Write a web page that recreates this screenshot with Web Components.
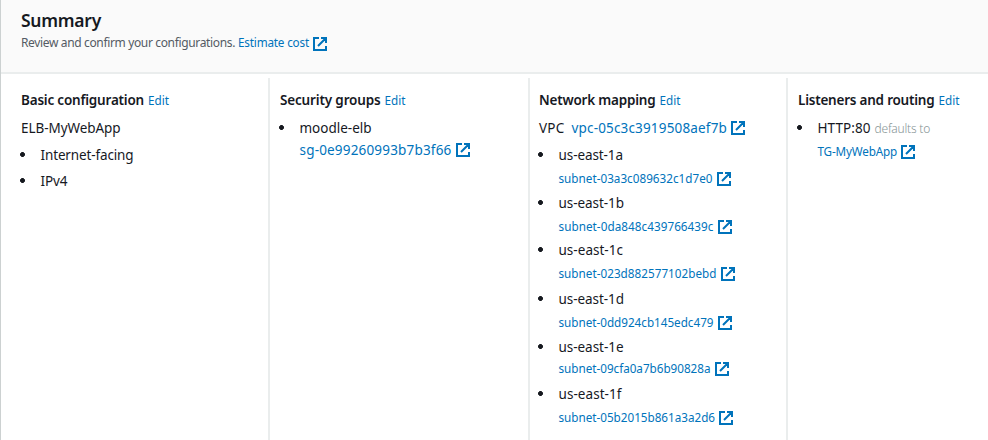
<!DOCTYPE html>
<html lang="en">
<head>
<meta charset="utf-8">
<title>Summary</title>
<style>
html,body{margin:0;height:440px;overflow:hidden;background:#fff}
body{font-family:"Noto Sans","Open Sans",sans-serif;font-size:14px;color:#16191f}
</style>
</head>
<body>
<summary-panel></summary-panel>
<script>
// A run of text that is tracked to fill its measure (w, in px).
customElements.define('text-run', class extends HTMLElement {
  connectedCallback() {
    const root = this.attachShadow({mode: 'open'});
    root.innerHTML = `<style>
      :host{display:block;flex:none;white-space:pre;font-size:13.5px;line-height:20px}
      :host([kind=title]){font-size:17.5px;font-weight:600}
      :host([kind=head]){font-size:13.5px;font-weight:600}
      :host([kind=note]){font-size:12px;color:#545b64}
      :host([kind=faint]){font-size:12px;font-weight:300;color:#879596}
      :host([kind=link]){color:#0073bb}
      :host([kind=small]){font-size:11.7px;color:#0073bb}
      span{display:inline-block}
    </style><span><slot></slot></span>`;
    const w = +this.getAttribute('w'), s = root.querySelector('span');
    const n = this.textContent.length;
    this.style.width = w + 'px';
    s.style.letterSpacing = (w - s.getBoundingClientRect().width) / n + 'px';
  }
});
// The box is shorter than its drawing, so that the icon hangs below the baseline.
customElements.define('external-icon', class extends HTMLElement {
  connectedCallback() {
    this.attachShadow({mode: 'open'}).innerHTML = `<style>
      :host{display:block;flex:none;width:14px;height:${14 - (this.getAttribute('drop') || 4)}px;margin-left:4px}
      svg{display:block}
    </style><svg width="14" height="14" viewBox="0 0 14 14" fill="none" stroke="#0073bb" stroke-width="2"><path d="M6 1H1v12h12V9M8 1h5v5M12.5 1.5L5 9"/></svg>`;
  }
});
// One line of a column; gap is the space above it.
customElements.define('info-line', class extends HTMLElement {
  connectedCallback() {
    this.attachShadow({mode: 'open'}).innerHTML = `<style>
      :host{display:flex;align-items:baseline;height:20px;line-height:20px;margin-top:${this.getAttribute('gap') || 0}px}
      :host::before{content:"\\200b";width:0;flex:none}
      :host([indent]),:host([bullet]){padding-left:19.5px}
      i{width:5px;height:8px;background:radial-gradient(circle at 2.5px 2.5px,#16191f 2.1px,transparent 2.8px);margin:0 16px 0 -21px;flex:none}
    </style>${this.hasAttribute('bullet') ? '<i></i>' : ''}<slot></slot>`;
  }
});
customElements.define('info-column', class extends HTMLElement {
  connectedCallback() {
    this.attachShadow({mode: 'open'}).innerHTML = `<style>
      :host{display:block;box-sizing:border-box;padding:12px 0 0 10px;border-left:2px solid #eaeded}
      :host([first]){border-left-color:transparent;padding-left:18px}
      :host([snug]){padding-left:9px}
    </style><slot></slot>`;
  }
});
customElements.define('summary-panel', class extends HTMLElement {
  connectedCallback() {
    const edit = w => `<text-run kind="small" w="${w}" style="margin-left:4px">Edit</text-run>`;
    const zones = [['a','03a3c089632c1d7e0',154,7,3,3,64.5],['b','0da848c439766439c',155,5,3,3,65.5],
      ['c','023d882577102bebd',158,4,3,3,64.5],['d','0dd924cb145edc479',155,6,3,3,65.5],
      ['e','09cfa0a7b6b90828a',152,5,1,3,65],['f','05b2015b861a3a2d6',156.5,6,3,3,63]];
    this.attachShadow({mode: 'open'}).innerHTML = `<style>
      :host{display:flex;flex-direction:column;box-sizing:border-box;height:440px;border-left:1px solid #ccd1d1}
      header{box-sizing:border-box;height:74px;padding:10px 0 0 20px;background:#fafafa;border-bottom:2px solid #eaeded}
      main{flex:1;display:grid;grid-template-columns:267px 260px 258px 1fr;padding-top:4px}
    </style>
    <header>
      <info-line><text-run kind="title" w="80">Summary</text-run></info-line>
      <info-line gap="2"><text-run kind="note" w="214">Review and confirm your configurations.</text-run><text-run kind="small" w="71" style="margin-left:3px">Estimate cost</text-run><external-icon></external-icon></info-line>
    </header>
    <main>
      <info-column first>
        <info-line><text-run kind="head" w="123">Basic configuration</text-run>${edit(21)}</info-line>
        <info-line gap="8"><text-run w="99.5">ELB-MyWebApp</text-run></info-line>
        <info-line gap="7" bullet><text-run w="93">Internet-facing</text-run></info-line>
        <info-line gap="6" bullet><text-run w="27">IPv4</text-run></info-line>
      </info-column>
      <info-column>
        <info-line><text-run kind="head" w="100.5">Security groups</text-run>${edit(21)}</info-line>
        <info-line gap="8" bullet><text-run w="72">moodle-elb</text-run></info-line>
        <info-line gap="2" indent><text-run kind="link" w="152">sg-0e99260993b7b3f66</text-run><external-icon drop="2"></external-icon></info-line>
      </info-column>
      <info-column snug>
        <info-line><text-run kind="head" w="116.5">Network mapping</text-run>${edit(21)}</info-line>
        <info-line gap="8"><text-run w="25.5">VPC</text-run><text-run kind="link" w="155.5" style="margin-left:7px">vpc-05c3c3919508aef7b</text-run><external-icon drop="2"></external-icon></info-line>
        ${zones.map(z => `<info-line gap="${z[3]}" bullet><text-run w="${z[6]}">us-east-1${z[0]}</text-run></info-line>
        <info-line gap="${z[4]}" indent><text-run kind="small" w="${z[2]}">subnet-${z[1]}</text-run><external-icon drop="${z[5]}"></external-icon></info-line>`).join('')}
      </info-column>
      <info-column>
        <info-line><text-run kind="head" w="136.5">Listeners and routing</text-run>${edit(21)}</info-line>
        <info-line gap="8" bullet><text-run w="53">HTTP:80</text-run><text-run kind="faint" w="55.5" style="margin-left:4px">defaults to</text-run></info-line>
        <info-line gap="3" indent><text-run kind="small" w="79.5">TG-MyWebApp</text-run><external-icon drop="3"></external-icon></info-line>
      </info-column>
    </main>`;
  }
});
</script>
</body>
</html>
